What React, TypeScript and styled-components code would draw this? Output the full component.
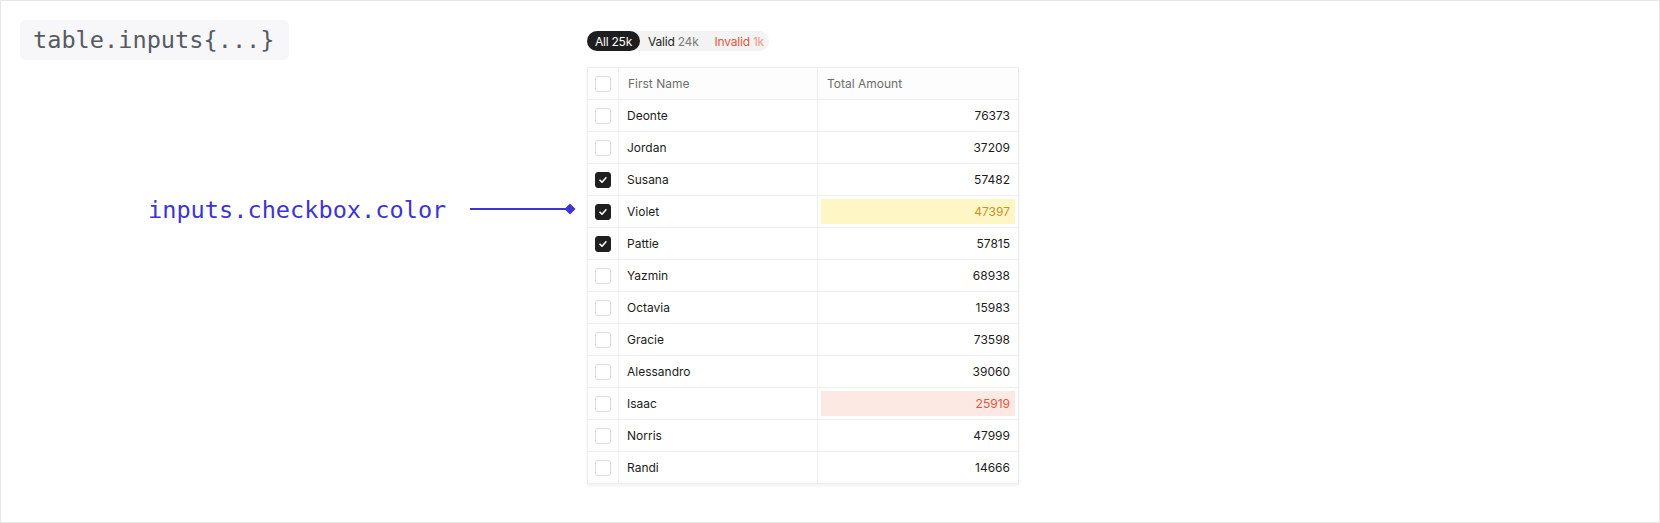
import React from "react";
import styled, { createGlobalStyle } from "styled-components";

const Global = createGlobalStyle`
  html, body { margin: 0; padding: 0; background: #fff; }
  body { font-family: Inter, "Noto Sans", Arial, sans-serif; }
  * { box-sizing: border-box; }
`;

const Frame = styled.div`
  width: 1660px;
  height: 523px;
  border: 1px solid #e6e6e6;
  padding: 19px;
  display: flex;
  align-items: flex-start;
  background: #fff;
`;

const LeftColumn = styled.div`
  width: 567px;
  flex: 0 0 567px;
  display: flex;
  flex-direction: column;
  align-items: flex-start;
`;

const CodeTag = styled.div`
  height: 40px;
  width: 269px;
  padding: 0 13px;
  display: flex;
  align-items: center;
  background: #f7f7f9;
  border-radius: 5px;
  font-family: "DejaVu Sans Mono", "Liberation Mono", monospace;
  font-size: 23.6px;
  color: #575a63;
  white-space: nowrap;
`;

const Annotation = styled.div`
  margin-top: 136px;
  padding-left: 128px;
  height: 28px;
  display: flex;
  align-items: center;
  gap: 24px;
`;

const AnnotationLabel = styled.span`
  font-family: "DejaVu Sans Mono", "Liberation Mono", monospace;
  font-size: 23.6px;
  line-height: 28px;
  color: #3d35d1;
  white-space: nowrap;
`;

const ArrowSvg = styled.svg`
  flex: 0 0 106px;
  margin-top: -2px;
`;

const RightColumn = styled.div`
  display: flex;
  flex-direction: column;
  align-items: flex-start;
  padding-top: 11px;
  gap: 16px;
`;

const FilterBar = styled.div`
  height: 20px;
  width: 182px;
  display: flex;
  align-items: center;
  background: #f3f3f3;
  border-radius: 10px;
  font-size: 12px;
  letter-spacing: -0.2px;
`;

const FilterPill = styled.span<{ $active?: boolean; $tone?: "default" | "danger" }>`
  height: 20px;
  display: inline-flex;
  align-items: center;
  gap: 3px;
  padding: 0 8px;
  border-radius: 10px;
  background: ${(p) => (p.$active ? "#1e1e1e" : "transparent")};
  color: ${(p) => (p.$active ? "#ffffff" : p.$tone === "danger" ? "#e5533d" : "#1f1f1f")};
`;

const PillCount = styled.span<{ $active?: boolean; $tone?: "default" | "danger" }>`
  color: ${(p) => (p.$active ? "#ffffff" : p.$tone === "danger" ? "#f09a88" : "#7a7a7a")};
`;

const Table = styled.div`
  width: 432px;
  border: 1px solid #ececec;
  border-bottom: none;
  box-shadow: 0 2px 3px rgba(0, 0, 0, 0.06);
  background: #fff;
`;

const Row = styled.div`
  display: grid;
  grid-template-columns: 31px 199px 1fr;
  height: 32px;
  border-bottom: 1px solid #efefef;
`;

const CheckCell = styled.div`
  display: flex;
  align-items: center;
  justify-content: center;
  border-right: 1px solid #efefef;
  background: #fdfdfd;
`;

const Cell = styled.div<{ $header?: boolean; $align?: "left" | "right" }>`
  display: flex;
  align-items: center;
  justify-content: ${(p) => (p.$align === "right" ? "flex-end" : "flex-start")};
  padding: 0 ${(p) => (p.$align === "right" ? "8px" : p.$header ? "9px" : "8px")};
  font-size: 12px;
  color: ${(p) => (p.$header ? "#6d6d6d" : "#1c1c1c")};
  border-right: 1px solid #efefef;
  background: ${(p) => (p.$header ? "#fdfdfd" : "#fff")};
  &:last-child { border-right: none; }
`;

const ValueCell = styled.div`
  padding: 3px;
  display: flex;
  align-items: stretch;
`;

const ValueBox = styled.div<{ $state?: "warn" | "error" }>`
  flex: 1;
  display: flex;
  align-items: center;
  justify-content: flex-end;
  padding-right: 5px;
  font-size: 12px;
  background: ${(p) => (p.$state === "warn" ? "#fef6c4" : p.$state === "error" ? "#fde9e4" : "transparent")};
  color: ${(p) => (p.$state === "warn" ? "#c8932a" : p.$state === "error" ? "#e5533d" : "#1c1c1c")};
`;

const Box = styled.span<{ $checked?: boolean }>`
  width: 16px;
  height: 16px;
  border-radius: 3px;
  border: 1px solid ${(p) => (p.$checked ? "#1f1f1f" : "#dcdcdc")};
  background: ${(p) => (p.$checked ? "#1f1f1f" : "#fff")};
  display: inline-flex;
  align-items: center;
  justify-content: center;
`;

const Checkbox = ({ checked }: { checked?: boolean }) => (
  <Box $checked={checked}>
    {checked && (
      <svg width="12" height="12" viewBox="0 0 12 12" fill="none">
        <path d="M3 6.2 L5 8.2 L9 3.8" stroke="#fff" strokeWidth="1.6" strokeLinecap="round" strokeLinejoin="round" />
      </svg>
    )}
  </Box>
);

type RowData = { name: string; amount: number; checked?: boolean; state?: "warn" | "error" };

const rows: RowData[] = [
  { name: "Deonte", amount: 76373 },
  { name: "Jordan", amount: 37209 },
  { name: "Susana", amount: 57482, checked: true },
  { name: "Violet", amount: 47397, checked: true, state: "warn" },
  { name: "Pattie", amount: 57815, checked: true },
  { name: "Yazmin", amount: 68938 },
  { name: "Octavia", amount: 15983 },
  { name: "Gracie", amount: 73598 },
  { name: "Alessandro", amount: 39060 },
  { name: "Isaac", amount: 25919, state: "error" },
  { name: "Norris", amount: 47999 },
  { name: "Randi", amount: 14666 },
];

export default function App() {
  return (
    <>
      <Global />
      <Frame>
        <LeftColumn>
          <CodeTag>table.inputs{"{...}"}</CodeTag>
          <Annotation>
            <AnnotationLabel>inputs.checkbox.color</AnnotationLabel>
            <ArrowSvg width="106" height="12" viewBox="0 0 106 12">
              <line x1="0" y1="6" x2="98" y2="6" stroke="#3d35d1" strokeWidth="1.8" />
              <path d="M94.5 6 L100 0.5 L105.5 6 L100 11.5 Z" fill="#3d35d1" />
            </ArrowSvg>
          </Annotation>
        </LeftColumn>
        <RightColumn>
          <FilterBar>
            <FilterPill $active>
              All <PillCount $active>25k</PillCount>
            </FilterPill>
            <FilterPill>
              Valid <PillCount>24k</PillCount>
            </FilterPill>
            <FilterPill $tone="danger">
              Invalid <PillCount $tone="danger">1k</PillCount>
            </FilterPill>
          </FilterBar>
          <Table>
            <Row>
              <CheckCell>
                <Checkbox />
              </CheckCell>
              <Cell $header>First Name</Cell>
              <Cell $header>Total Amount</Cell>
            </Row>
            {rows.map((r) => (
              <Row key={r.name}>
                <CheckCell>
                  <Checkbox checked={r.checked} />
                </CheckCell>
                <Cell>{r.name}</Cell>
                <ValueCell>
                  <ValueBox $state={r.state}>{r.amount}</ValueBox>
                </ValueCell>
              </Row>
            ))}
          </Table>
        </RightColumn>
      </Frame>
    </>
  );
}
